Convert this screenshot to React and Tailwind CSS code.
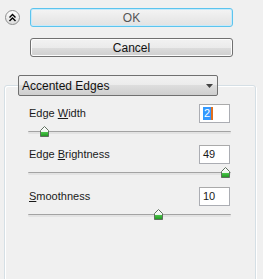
import React from 'react';

function Thumb() {
  return (
    <svg width="9" height="11" viewBox="0 0 9 11" className="block">
      <defs>
        <linearGradient id="thumbFill" x1="0" y1="0" x2="0" y2="1">
          <stop offset="0" stopColor="#ffffff" />
          <stop offset="0.55" stopColor="#eef6ee" />
          <stop offset="0.6" stopColor="#46c046" />
          <stop offset="1" stopColor="#1e961e" />
        </linearGradient>
      </defs>
      <path d="M4.5 0.5 L8.5 4.5 L8.5 10.5 L0.5 10.5 L0.5 4.5 Z" fill="url(#thumbFill)" stroke="#5f6f5f" strokeWidth="1" />
    </svg>
  );
}

function Slider({ thumbLeft }) {
  return (
    <div className="relative h-[10px] mt-[4px]">
      <div className="absolute left-0 right-0 top-[4px] h-[3px] border-t border-[#a3a3a3] bg-white rounded-[1px] shadow-[inset_0_0_0_1px_#e3e3e3]" />
      <div className={'absolute top-[-1px] ' + thumbLeft}>
        <Thumb />
      </div>
    </div>
  );
}

function Field({ label, value, selected }) {
  return (
    <div className="flex items-center justify-between h-[19px]">
      <span className="ml-[1px]">{label}</span>
      <div className="mr-[1px] w-[31px] h-[19px] bg-white border border-[#abadb3] border-t-[#aaaaaa] flex items-center pl-[3px]">
        {selected ? (
          <span className="flex items-center">
            <span className="bg-[#3399ff] text-white leading-[13px] px-[1px]">{value}</span>
            <span className="w-[2px] h-[13px] bg-[#e07020]" />
          </span>
        ) : (
          <span>{value}</span>
        )}
      </div>
    </div>
  );
}

export default function App() {
  return (
    <div className="w-[263px] h-[279px] overflow-hidden bg-[#f0f0f0] text-[11px] text-[#1a1a1a] pt-[8px]" style={{ fontFamily: '"Liberation Sans", Arial, sans-serif' }}>
      <div className="flex items-start">
        <button className="ml-[5px] mt-[2px] w-[15px] h-[15px] rounded-full border border-[#8e8f8f] bg-gradient-to-b from-white to-[#dcdcdc] flex items-center justify-center">
          <svg width="9" height="9" viewBox="0 0 9 9">
            <path d="M1.5 4.5 L4.5 1.5 L7.5 4.5 M1.5 8 L4.5 5 L7.5 8" fill="none" stroke="#000" strokeWidth="1.4" />
          </svg>
        </button>
        <div className="ml-[10px] w-[203px] flex flex-col gap-[11px]">
          <button className="h-[19px] rounded-[3px] border border-[#5cc4ee] bg-gradient-to-b from-[#f4f4f4] to-[#e2e2e2] shadow-[inset_0_0_0_1px_#c7eafa] text-[12px] text-[#555] leading-none">
            OK
          </button>
          <button className="h-[19px] rounded-[3px] border border-[#707070] bg-[linear-gradient(#f2f2f2,#ebebeb_50%,#dddddd_50%,#cfcfcf)] shadow-[inset_0_0_0_1px_#fcfcfc] text-[12px] text-[#111] leading-none">
            Cancel
          </button>
        </div>
      </div>

      <fieldset className="mt-[18px] ml-[4px] w-[252px] h-[230px] border border-[#d5dfe5] rounded-[3px] shadow-[inset_1px_1px_0_#fff,1px_1px_0_#fff] pl-[23px] pr-[24px]">
        <legend className="-ml-[10px] w-[200px] h-[21px] rounded-[2px] border border-[#707070] bg-[linear-gradient(#f2f2f2,#ebebeb_50%,#dddddd_50%,#cfcfcf)] flex items-center justify-between pl-[3px] pr-[4px] text-[12px] text-[#111]">
          <span>Accented Edges</span>
          <svg width="7" height="4" viewBox="0 0 7 4">
            <path d="M0 0 L7 0 L3.5 4 Z" fill="#444" />
          </svg>
        </legend>

        <div className="mt-[8px]">
          <Field label={<>Edge <u>W</u>idth</>} value="2" selected />
          <Slider thumbLeft="left-[12px]" />
        </div>
        <div className="mt-[8px]">
          <Field label={<>Edge <u>B</u>rightness</>} value="49" />
          <Slider thumbLeft="left-[193px]" />
        </div>
        <div className="mt-[9px]">
          <Field label={<><u>S</u>moothness</>} value="10" />
          <Slider thumbLeft="left-[126px]" />
        </div>
      </fieldset>
    </div>
  );
}
